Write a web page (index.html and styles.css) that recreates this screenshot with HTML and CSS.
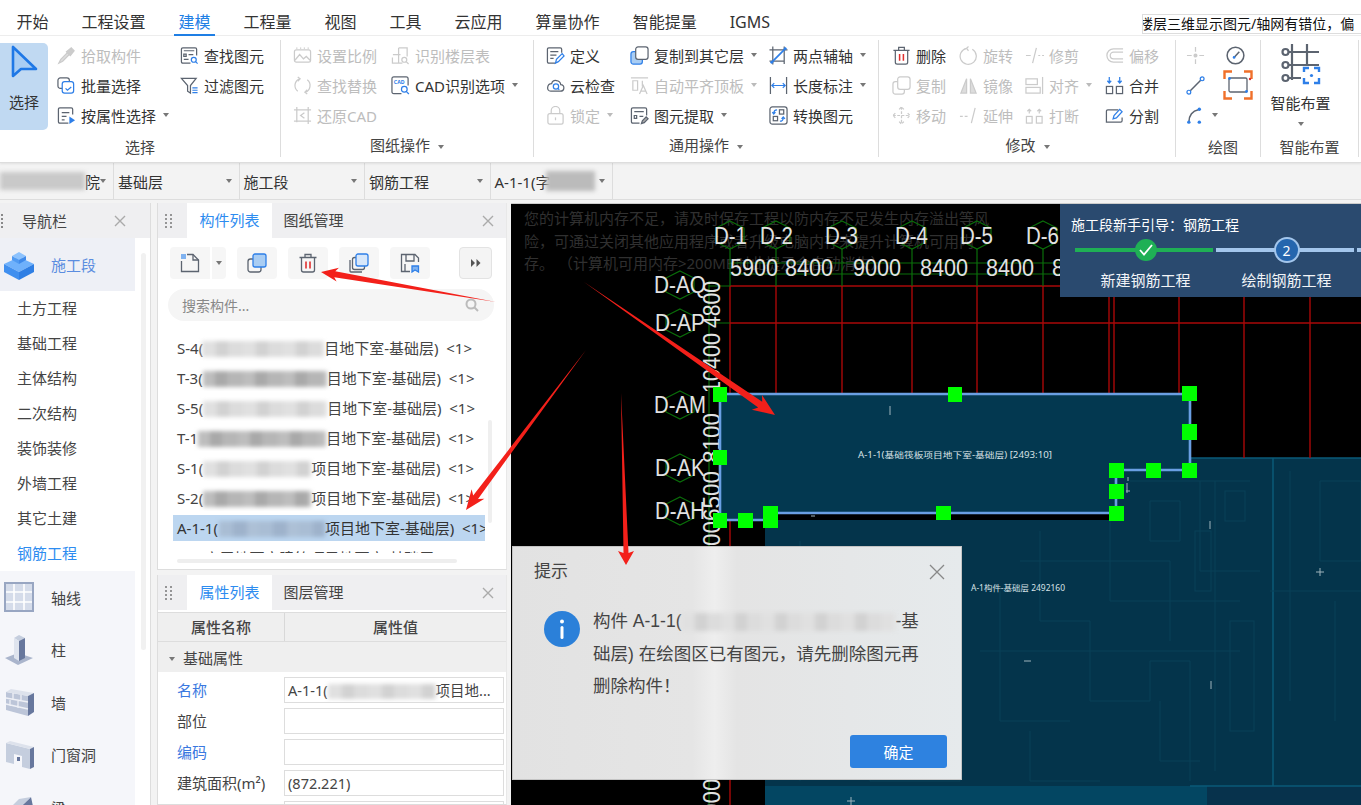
FILE: index.html
```html
<!DOCTYPE html>
<html lang="zh-CN">
<head>
  <meta charset="UTF-8" />
  <title>建模</title>
  <link rel="stylesheet" href="styles.css">
</head>
<body>

<nav class="menubar">
  <a class="tab">开始</a>
  <a class="tab">工程设置</a>
  <a class="tab active">建模</a>
  <a class="tab">工程量</a>
  <a class="tab">视图</a>
  <a class="tab">工具</a>
  <a class="tab">云应用</a>
  <a class="tab">算量协作</a>
  <a class="tab">智能提量</a>
  <a class="tab">IGMS</a>
  <div class="ask"><span>楼层三维显示图元/轴网有错位，偏</span></div>
</nav>

<!-- 功能区 -->
<section class="ribbon">
  <div class="group g-select">
    <div class="group-body">
      <button class="big-select">
        <svg width="32" height="40" viewBox="0 0 32 40"><path d="M5 2 L5 31 L13 24 L28 24 Z" fill="#a9cdf3" stroke="#1f78e6" stroke-width="2.6" stroke-linejoin="round"/></svg>
        <span>选择</span>
      </button>
      <div class="col c123">
        <div class="tool off"><svg class="ic" viewBox="0 0 20 20"><path d="M2 18 L4 14 L11 7 L13 9 L6 16 Z" fill="#ddd"/><path d="M10 6 L15 2 L18 5 L14 10 Z" fill="#ccc"/></svg>拾取构件</div>
        <div class="tool"><svg class="ic" viewBox="0 0 20 20"><rect x="1" y="2" width="12" height="11" rx="2.5"/><rect x="5.5" y="6" width="12" height="12" rx="2.5" fill="#fff" class="b"/><path d="M9 13 l2 2 l4 -3.5" class="b"/></svg>批量选择</div>
        <div class="tool"><svg class="ic" viewBox="0 0 20 20"><path d="M12 18 H3 Q1.5 18 1.5 16.5 V3.5 Q1.5 2 3 2 H15 Q16.5 2 16.5 3.5 V9"/><path d="M5 7 H13 M5 11 H10 M5 14.5 H8"/><path d="M13 11 L19 15 L13 19 Z" class="bf"/></svg>按属性选择<i class="caret"></i></div>
      </div>
      <div class="col">
        <div class="tool"><svg class="ic" viewBox="0 0 20 20"><path d="M11 18 H3 Q1.5 18 1.5 16.5 V3.5 Q1.5 2 3 2 H16 Q17.5 2 17.5 3.5 V10"/><path d="M4 5 H15 M4 8.5 H6.5 V11 H4 Z M9 9 H14 M4 14 H9"/><circle cx="14.5" cy="14.5" r="2.6" class="b"/><path d="M16.5 16.5 L18.5 18.5" class="b"/></svg>查找图元</div>
        <div class="tool"><svg class="ic" viewBox="0 0 20 20"><path d="M1.5 2.5 H17 L11 10 V18 L8 16 V10 Z"/><path d="M13 12.5 H18.5 M13 15 H18.5 M13 17.5 H18.5" class="b"/></svg>过滤图元</div>
      </div>
    </div>
    <div class="group-label">选择</div>
  </div>

  <div class="group g-draw">
    <div class="group-body">
      <div class="col c98">
        <div class="tool off"><svg class="ic" viewBox="0 0 20 20"><rect x="1.5" y="4" width="17" height="13" rx="2"/><path d="M4 1.5 V3 M8 1.5 V3 M12 1.5 V3 M16 1.5 V3"/><path d="M2 15 L7 9 L11 13.5 L14 11 L18 15"/></svg>设置比例</div>
        <div class="tool off"><svg class="ic" viewBox="0 0 20 20"><path d="M7 3 A7.5 7.5 0 0 0 5 16 M13 17 A7.5 7.5 0 0 0 15 4"/><path d="M5 1 L7.5 3 L5 5.5 M15 19 L12.5 17 L15 14.5"/></svg>查找替换</div>
        <div class="tool off"><svg class="ic" viewBox="0 0 20 20"><path d="M4 1 V17 M1 4 H19 M16 1 V19 M1 16 H19"/><path d="M12 7 L8 10 L12 13"/></svg>还原CAD</div>
      </div>
      <div class="col">
        <div class="tool off"><svg class="ic" viewBox="0 0 20 20"><path d="M8 2 H17 V11 M8 2 V18 M2 9 H10 M1.5 12 V18 H12"/><circle cx="14" cy="14.5" r="2.6"/><path d="M16 16.5 L18.5 19"/></svg>识别楼层表</div>
        <div class="tool"><svg class="ic" viewBox="0 0 20 20"><path d="M11 18.5 H3 Q1 18.5 1 16.5 V3 Q1 1 3 1 H16 Q18 1 18 3 V10"/><text x="3" y="8" class="cad">CAD</text><circle cx="14" cy="14" r="3" class="b"/><path d="M16 16.2 L18.8 19" class="b"/></svg>CAD识别选项<i class="caret"></i></div>
      </div>
    </div>
    <div class="group-label pull">图纸操作<i class="caret"></i></div>
  </div>

  <div class="group g-common">
    <div class="group-body">
      <div class="col c84">
        <div class="tool"><svg class="ic" viewBox="0 0 20 20"><path d="M10 18 H3 Q1.5 18 1.5 16.5 V3.5 Q1.5 2 3 2 H15 Q16.5 2 16.5 3.5 V7"/><path d="M4.5 6 H13 M4.5 9.5 H11 M4.5 13 H8"/><path d="M10 18 L11 14 L17 8 L19 10.5 L13 16.5 Z" class="b"/></svg>定义</div>
        <div class="tool"><svg class="ic" viewBox="0 0 20 20"><path d="M5 16 H15 C20 16 20 9 15.5 9 C15 4 7 3 6 8 C1 8 0 16 5 16 Z"/><circle cx="10.5" cy="11" r="2.8" class="b"/><path d="M12.5 13 L14 14.5" class="b"/></svg>云检查</div>
        <div class="tool off"><svg class="ic" viewBox="0 0 20 20"><rect x="2" y="8" width="16" height="11" rx="2"/><path d="M5.5 8 V5 A4.5 4.5 0 0 1 14.5 5 V8"/><path d="M10 12 V15"/></svg>锁定<i class="caret"></i></div>
      </div>
      <div class="col c139">
        <div class="tool"><svg class="ic" viewBox="0 0 20 20"><rect x="1" y="6" width="12" height="13" rx="2.5" fill="#a9cdf3" class="b"/><rect x="6" y="1" width="13" height="13" rx="2.5" fill="#fff"/></svg>复制到其它层<i class="caret"></i></div>
        <div class="tool off"><svg class="ic" viewBox="0 0 20 20"><path d="M1 2 H19 M3 5 V15 H8 V5 Z M13 5 V11"/><path d="M10 19 L14 10 L18 19 M11.5 16 H16.5"/></svg>自动平齐顶板<i class="caret"></i></div>
        <div class="tool"><svg class="ic" viewBox="0 0 20 20"><path d="M10 18 H3 Q1.5 18 1.5 16.5 V3.5 Q1.5 2 3 2 H16 Q17.5 2 17.5 3.5 V10"/><path d="M4.5 6 H14.5 M4.5 10 H7 V13 H4.5 Z M10 11 H14"/><path d="M12 18.5 L13 15.5 L17 11.5 L19 13.5 L15 17.5 Z" fill="#aaa"/></svg>图元提取<i class="caret"></i></div>
      </div>
      <div class="col">
        <div class="tool"><svg class="ic" viewBox="0 0 20 20"><path d="M0.5 4 H19.5 M4 0.5 V19.5 M0.5 16 H16 M16 0.5 V19"/><path d="M2 18 L18 2" class="b thick"/><circle cx="3" cy="17" r="1.5" class="bf"/><circle cx="17" cy="3" r="1.5" class="bf"/></svg>两点辅轴<i class="caret"></i></div>
        <div class="tool"><svg class="ic" viewBox="0 0 20 20"><path d="M1.5 1 V19 M18.5 1 V19"/><path d="M3 10 H17 M5.5 7.5 L3 10 L5.5 12.5 M14.5 7.5 L17 10 L14.5 12.5" class="b"/></svg>长度标注<i class="caret"></i></div>
        <div class="tool"><svg class="ic" viewBox="0 0 20 20"><rect x="1" y="1" width="18" height="18" rx="2.5"/><rect x="11" y="4" width="4.5" height="4.5"/><rect x="4.5" y="11" width="4.5" height="4.5"/><path d="M8.5 4 Q5 4 5 8 M3.5 6.5 L5 8.5 L6.8 6.5 M11.5 16 Q15 16 15 12 M13.2 13.5 L15 11.5 L16.8 13.5" class="b"/></svg>转换图元</div>
      </div>
    </div>
    <div class="group-label pull">通用操作<i class="caret"></i></div>
  </div>

  <div class="group g-edit">
    <div class="group-body">
      <div class="col c67">
        <div class="tool"><svg class="ic" viewBox="0 0 20 20"><path d="M1.5 4.5 H18.5 M7 4 V1.5 H13 V4 M3.5 5 V17 Q3.5 19 5.5 19 H14.5 Q16.5 19 16.5 17 V5"/><path d="M8 8.5 V15.5 M12 8.5 V15.5" class="r"/></svg>删除</div>
        <div class="tool off"><svg class="ic" viewBox="0 0 20 20"><rect x="1" y="6" width="12" height="13" rx="2.5"/><rect x="6" y="1" width="13" height="13" rx="2.5" fill="#fff"/></svg>复制</div>
        <div class="tool off"><svg class="ic" viewBox="0 0 20 20"><path d="M10 1 V19 M1 10 H19 M7.5 3.5 L10 1 L12.5 3.5 M7.5 16.5 L10 19 L12.5 16.5 M3.5 7.5 L1 10 L3.5 12.5 M16.5 7.5 L19 10 L16.5 12.5" stroke-dasharray="3 1.5"/></svg>移动</div>
      </div>
      <div class="col c66">
        <div class="tool off"><svg class="ic" viewBox="0 0 20 20"><path d="M8 2.5 A8.5 8.5 0 1 0 14 3.5"/><path d="M10 0.5 L8 2.5 L10 5"/></svg>旋转</div>
        <div class="tool off"><svg class="ic" viewBox="0 0 20 20"><path d="M8 3 L2 18 H8 Z" fill="#ddd"/><path d="M12 3 L18 18 H12 Z" fill="#ddd"/></svg>镜像</div>
        <div class="tool off"><svg class="ic" viewBox="0 0 20 20"><path d="M1 11 H4 M6 11 H9"/><path d="M13 18 L17 2"/></svg>延伸</div>
      </div>
      <div class="col c80">
        <div class="tool off"><svg class="ic" viewBox="0 0 20 20"><path d="M1 10 H6 M8 18 L12 2"/><path d="M14 10 H16 M18 10 H20"/></svg>修剪</div>
        <div class="tool off"><svg class="ic" viewBox="0 0 20 20"><rect x="1" y="3" width="12" height="6"/><rect x="1" y="12" width="15" height="6"/><path d="M18.5 1 V19"/></svg>对齐<i class="caret"></i></div>
        <div class="tool off"><svg class="ic" viewBox="0 0 20 20"><rect x="1.5" y="11" width="6" height="7"/><rect x="12" y="11" width="6" height="7"/><path d="M4.5 8 V4 M2.5 5.5 L4.5 3.5 L6.5 5.5 M15 8 V4 M13 5.5 L15 3.5 L17 5.5"/></svg>打断</div>
      </div>
      <div class="col">
        <div class="tool off"><svg class="ic" viewBox="0 0 20 20"><path d="M19 3 H9 A7 7 0 0 0 9 17 H19 M19 6.5 H9 A3.5 3.5 0 0 0 9 13.5 H19"/></svg>偏移</div>
        <div class="tool"><svg class="ic" viewBox="0 0 20 20"><rect x="1.5" y="11" width="6.5" height="7.5"/><rect x="12" y="11" width="6.5" height="7.5"/><path d="M4.5 1 V7 M2.5 5 L4.5 7.5 L6.5 5 M15.5 1 V7 M13.5 5 L15.5 7.5 L17.5 5" class="b"/></svg>合并</div>
        <div class="tool"><svg class="ic" viewBox="0 0 20 20"><path d="M14 4 H3 Q1.5 4 1.5 5.5 V17 H16.5 Q18 17 18 15.5 V12"/><path d="M8.5 13.5 L9.5 10 L15.5 3.5 L18 6 L12 12.5 Z" class="b"/></svg>分割</div>
      </div>
    </div>
    <div class="group-label pull">修改<i class="caret"></i></div>
  </div>

  <div class="group g-shape">
    <div class="group-body">
      <div class="col c40">
        <div class="tool off"><svg class="ic" viewBox="0 0 20 20"><path d="M10 1 V6 M10 14 V19 M1 10 H6 M14 10 H19"/><circle cx="10" cy="10" r="1.5" fill="#ccc"/></svg></div>
        <div class="tool"><svg class="ic" viewBox="0 0 20 20"><path d="M3.5 16.5 L16.5 3.5" stroke-width="1.6"/><circle cx="3" cy="17" r="2" class="b" fill="#fff"/><circle cx="17" cy="3" r="2" class="b" fill="#fff"/></svg></div>
        <div class="tool"><svg class="ic" viewBox="0 0 20 20"><path d="M3 17 C3 10 7 5 13 4" stroke-width="1.6"/><circle cx="3" cy="17" r="1.8" class="bf"/><circle cx="14" cy="3.5" r="1.8" class="bf"/><circle cx="14" cy="17" r="1.8" class="bf"/></svg><i class="caret"></i></div>
      </div>
      <div class="col">
        <div class="tool"><svg class="ic" viewBox="0 0 20 20"><circle cx="10" cy="10" r="8.8" stroke-width="1.6"/><path d="M8.5 12 L14 6" stroke-width="1.6"/><circle cx="8.5" cy="12" r="1.4" class="bf"/></svg></div>
        <div class="tool picked"><svg class="frame" width="30" height="30" viewBox="0 0 30 30"><path d="M1.5 9 V1.5 H9 M21 1.5 H28.5 V9 M28.5 21 V28.5 H21 M9 28.5 H1.5 V21" fill="none" stroke="#f0702a" stroke-width="2.4"/><rect x="6" y="8" width="18" height="14" rx="1.5" fill="none" stroke="#5c6470" stroke-width="1.3"/><circle cx="6.5" cy="8.5" r="1.4" fill="#2e7fe8"/><circle cx="23.5" cy="21.5" r="1.4" fill="#2e7fe8"/><circle cx="27" cy="9" r="1.2" fill="#e03030"/></svg></div>
      </div>
    </div>
    <div class="group-label">绘图</div>
  </div>

  <div class="group g-smart">
    <div class="smart-body">
      <svg width="40" height="42" viewBox="0 0 40 42" fill="none" stroke="#5c6470" stroke-width="2.2"><path d="M11 0 V36 M26 0 V22 M8 8 H38 M8 21 H38 M8 34 H20"/><circle cx="4.5" cy="8" r="3"/><circle cx="4.5" cy="21" r="3"/><circle cx="4.5" cy="34" r="3"/><path d="M23 28 V24 H28 M33 24 H38 V28 M38 34 V39 H33 M28 39 H23 V34" stroke="#2e7fe8" stroke-width="2.4"/><circle cx="30.5" cy="31.5" r="1.6" fill="#2e7fe8" stroke="none"/></svg>
      <span>智能布置</span>
      <i class="caret"></i>
    </div>
    <div class="group-label">智能布置</div>
  </div>
</section>

<div class="floorbar">
  <div class="seg"><span class="smudge s-top"></span><span>院</span><i class="caret"></i></div>
  <div class="seg"><span>基础层</span><i class="caret"></i></div>
  <div class="seg"><span>施工段</span><i class="caret"></i></div>
  <div class="seg"><span>钢筋工程</span><i class="caret"></i></div>
  <div class="seg seg-last"><span>A-1-1(字</span><span class="smudge s-comp"></span><i class="caret"></i></div>
</div>

<main class="workspace">
  <!-- 导航栏 -->
  <aside class="nav-panel">
    <div class="panel-head nav-head">
      <svg class="grip" width="6" height="16" viewBox="0 0 6 16"><g fill="#666"><circle cx="1" cy="2" r="1"/><circle cx="1" cy="6" r="1"/><circle cx="1" cy="10" r="1"/><circle cx="1" cy="14" r="1"/></g></svg>
      <span class="nav-title">导航栏</span>
      <svg class="close" width="12" height="12" viewBox="0 0 12 12"><path d="M1 1 L11 11 M11 1 L1 11" stroke="#aaa" stroke-width="1.4"/></svg>
    </div>
    <div class="nav-body">
      <div class="nav-list">
        <div class="nav-big current">
          <svg width="32" height="32" viewBox="0 0 32 32"><path d="M1 15 L16 8 L31 15 L16 23 Z" fill="#6fb1fb"/><path d="M1 15 V23 L16 31 V23 Z" fill="#3f8fef"/><path d="M31 15 V23 L16 31 V23 Z" fill="#2f7fe4"/><path d="M9 7 L16 3 L23 7 L16 11 Z" fill="#8cc2fd"/><path d="M9 7 V11 L16 15 V11 Z" fill="#4f9af2"/><path d="M23 7 V11 L16 15 V11 Z" fill="#3f8aea"/></svg>
          <span>施工段</span>
        </div>
        <div class="nav-item">土方工程</div>
        <div class="nav-item">基础工程</div>
        <div class="nav-item">主体结构</div>
        <div class="nav-item">二次结构</div>
        <div class="nav-item">装饰装修</div>
        <div class="nav-item">外墙工程</div>
        <div class="nav-item">其它土建</div>
        <div class="nav-item on">钢筋工程</div>
        <div class="nav-group">
          <div class="nav-big">
            <svg width="32" height="32" viewBox="0 0 32 32"><rect x="2" y="2" width="28" height="28" fill="#d5dcea" stroke="#98a6c2" stroke-width="2"/><path d="M11 3 V29 M21 3 V29 M3 11 H29 M3 21 H29" stroke="#fff" stroke-width="1.6"/></svg>
            <span>轴线</span>
          </div>
          <div class="nav-big">
            <svg width="32" height="32" viewBox="0 0 32 32"><path d="M2 24 L15 19 L30 24 L15 31 Z" fill="#aab5cc"/><path d="M11 4 L16 1 L22 4 L16 7 Z" fill="#c5cede"/><path d="M11 4 V24 L16 27 V7 Z" fill="#dfe4ee"/><path d="M22 4 V24 L16 27 V7 Z" fill="#67779d"/></svg>
            <span>柱</span>
          </div>
          <div class="nav-big">
            <svg width="32" height="32" viewBox="0 0 32 32"><path d="M3 6 L25 10 V30 L3 24 Z" fill="#bcc5d8"/><path d="M3 6 L8 3 L31 7 L25 10 Z" fill="#dde2ec"/><path d="M25 10 L31 7 V26 L25 30 Z" fill="#67779d"/><path d="M3 12 L25 16 M3 18 L25 23 M10 7 V13 M18 9 V15 M7 14 V20 M15 15 V22" stroke="#eef0f6" stroke-width="1.3"/></svg>
            <span>墙</span>
          </div>
          <div class="nav-big">
            <svg width="32" height="32" viewBox="0 0 32 32"><path d="M3 4 L27 10 V30 L19 28 V17 L11 15 V25 L3 23 Z" fill="#c5cede"/><path d="M3 4 L7 2 L31 8 L27 10 Z" fill="#dde2ec"/><path d="M27 10 L31 8 V28 L27 30 Z" fill="#67779d"/><rect x="14" y="18" width="3" height="4" fill="#67779d"/></svg>
            <span>门窗洞</span>
          </div>
          <div class="nav-big">
            <svg width="32" height="32" viewBox="0 0 32 32"><path d="M3 30 L28 6 L31 20 L20 32 Z" fill="#67779d"/><path d="M3 30 L28 6 L16 8 L0 24 Z" fill="#c5cede"/></svg>
            <span>梁</span>
          </div>
        </div>
      </div>
      <div class="nav-scroll"></div>
    </div>
  </aside>

  <div class="mid-col">
    <!-- 构件列表 -->
    <section class="panel list-panel">
      <div class="panel-head">
        <svg class="grip" width="8" height="16" viewBox="0 0 8 16"><g fill="#777"><circle cx="1" cy="2" r="1"/><circle cx="1" cy="6" r="1"/><circle cx="1" cy="10" r="1"/><circle cx="1" cy="14" r="1"/><circle cx="6" cy="2" r="1"/><circle cx="6" cy="6" r="1"/><circle cx="6" cy="10" r="1"/><circle cx="6" cy="14" r="1"/></g></svg>
        <span class="ptab active">构件列表</span>
        <span class="ptab">图纸管理</span>
        <svg class="close" width="12" height="12" viewBox="0 0 12 12"><path d="M1 1 L11 11 M11 1 L1 11" stroke="#aaa" stroke-width="1.4"/></svg>
      </div>
      <div class="list-tools">
        <button class="tbtn tb-new"><svg width="20" height="20" viewBox="0 0 20 20" fill="none" stroke="#5c6470" stroke-width="1.3"><path d="M7 1.5 H13 L18.5 7 V18.5 H1.5 V8"/><path d="M13 1.5 V7 H18.5"/><rect x="1" y="1" width="5" height="5" fill="#7fb2f0" stroke="none"/></svg></button>
        <button class="tbtn tb-drop"><i class="caret"></i></button>
        <button class="tbtn"><svg width="20" height="20" viewBox="0 0 20 20" fill="none" stroke="#5c6470" stroke-width="1.3"><rect x="1" y="6" width="13" height="13" rx="2.5"/><rect x="6" y="1" width="13" height="13" rx="2" fill="#a9cdf3" stroke="#2e7fe8"/></svg></button>
        <button class="tbtn"><svg width="20" height="20" viewBox="0 0 20 20" fill="none" stroke="#5c6470" stroke-width="1.3"><path d="M1.5 4.5 H18.5 M7 4 V1.5 H13 V4 M3.5 5 V17 Q3.5 19 5.5 19 H14.5 Q16.5 19 16.5 17 V5"/><path d="M8 8.5 V15.5 M12 8.5 V15.5" stroke="#e03030" stroke-width="1.6"/></svg></button>
        <button class="tbtn"><svg width="20" height="20" viewBox="0 0 20 20" fill="none" stroke="#5c6470" stroke-width="1.3"><path d="M1 7 V18 Q1 19 2 19 H13"/><rect x="3.5" y="4.5" width="12" height="12" rx="2"/><rect x="7" y="1" width="12" height="12" rx="2" fill="#d7e7fa" stroke="#2e7fe8"/></svg></button>
        <button class="tbtn"><svg width="20" height="20" viewBox="0 0 20 20" fill="none" stroke="#5c6470" stroke-width="1.3"><path d="M10 18.5 H1.5 V1.5 H15 L18.5 5 V9"/><path d="M6 1.5 V8 H14 V1.5 M5 18 V11"/><path d="M12 13 H18.5 V19 L15 17 L12 19 Z" fill="#7fb2f0" stroke="#2e7fe8"/></svg></button>
        <button class="tbtn tb-more"><svg width="10" height="8" viewBox="0 0 10 8"><path d="M0 0 L4 4 L0 8 Z M5.5 0 L9.5 4 L5.5 8 Z" fill="#555"/></svg></button>
      </div>
      <div class="search">
        <span>搜索构件...</span>
        <svg width="14" height="14" viewBox="0 0 14 14" fill="none" stroke="#bbb" stroke-width="2"><circle cx="6" cy="6" r="4.5"/><path d="M9.5 9.5 L13 13"/></svg>
      </div>
      <ul class="comp-list">
        <li>S-4(<span class="smudge w-a light"></span>目地下室-基础层)&nbsp;&nbsp;&lt;1&gt;</li>
        <li>T-3(<span class="smudge w-b dark"></span>目地下室-基础层)&nbsp;&nbsp;&lt;1&gt;</li>
        <li>S-5(<span class="smudge w-c light"></span>目地下室-基础层)&nbsp;&nbsp;&lt;1&gt;</li>
        <li>T-1<span class="smudge w-d dark"></span>目地下室-基础层)&nbsp;&nbsp;&lt;1&gt;</li>
        <li>S-1(<span class="smudge w-e light"></span>项目地下室-基础层)&nbsp;&nbsp;&lt;1&gt;</li>
        <li>S-2(<span class="smudge w-f dark"></span>项目地下室-基础层)&nbsp;&nbsp;&lt;1&gt;</li>
        <li class="picked-row">A-1-1(<span class="smudge w-g blue"></span>项目地下室-基础层)&nbsp;&nbsp;&lt;1&gt;</li>
        <li>A-2(高层地下室建筑项目地下室-基础层)&nbsp;&nbsp;&lt;1&gt;</li>
      </ul>
      <div class="hscroll"></div>
      <div class="vscroll"></div>
    </section>

    <!-- 属性列表 -->
    <section class="panel prop-panel">
      <div class="panel-head">
        <svg class="grip" width="8" height="16" viewBox="0 0 8 16"><g fill="#777"><circle cx="1" cy="2" r="1"/><circle cx="1" cy="6" r="1"/><circle cx="1" cy="10" r="1"/><circle cx="1" cy="14" r="1"/><circle cx="6" cy="2" r="1"/><circle cx="6" cy="6" r="1"/><circle cx="6" cy="10" r="1"/><circle cx="6" cy="14" r="1"/></g></svg>
        <span class="ptab active">属性列表</span>
        <span class="ptab">图层管理</span>
        <svg class="close" width="12" height="12" viewBox="0 0 12 12"><path d="M1 1 L11 11 M11 1 L1 11" stroke="#aaa" stroke-width="1.4"/></svg>
      </div>
      <div class="prop-head"><div>属性名称</div><div>属性值</div></div>
      <div class="prop-section"><i class="caret"></i>基础属性</div>
      <div class="prop-row"><label class="link">名称</label><div class="field">A-1-1(<span class="smudge w-h light"></span>项目地...</div></div>
      <div class="prop-row"><label>部位</label><div class="field"></div></div>
      <div class="prop-row"><label class="link">编码</label><div class="field"></div></div>
      <div class="prop-row"><label>建筑面积(m²)</label><div class="field">(872.221)</div></div>
      <div class="prop-row"><label></label><div class="field"></div></div>
    </section>
  </div>

  <!-- 绘图区 -->
  <section class="canvas">
    <svg class="cad-view" viewBox="511 203 850 602" width="850" height="602">
      <g class="notice">
        <text x="524" y="223">您的计算机内存不足，请及时保存工程以防内存不足发生内存溢出等风</text>
        <text x="524" y="246">险，可通过关闭其他应用程序或者升级电脑内存来提升计算机可用内</text>
        <text x="524" y="268">存。 （计算机可用内存&gt;200MB时此提示会自动消失）</text>
      </g>

      <!-- 底层填充 -->
      <path d="M1190 457 H1361 V805 H765 V519 H1116 V469 H1190 Z" fill="#04344b"/>
      <rect x="765" y="785" width="442" height="20" fill="#034662"/>
      <rect x="1207" y="785" width="154" height="20" fill="#07324c"/>
      <path d="M1190 457 H1361 M1273 457 V785 M1190 785 H1361" stroke="#0a5a78" stroke-width="1.5" fill="none"/>
      <g class="faint">
        <path d="M1040 530 V620 H1090 V700 H1150 V660 H1190 V780 M1020 560 H1170 V640 M1000 590 V720 H1070 M1110 520 V600 H1240 M1200 480 V570 H1260 M1215 480 V770 M980 650 H1240 M1030 730 V780 H1100 M1160 700 V760 H1200 M1290 470 V700 M1320 480 H1361 V560 H1320 Z M1335 600 V720 M1270 590 H1361 M1130 480 H1250 M1150 500 H1180 V540 H1150 Z M800 540 V780 M860 620 H940 M870 700 V780 H960 V720" />
        <rect x="1225" y="490" width="20" height="30"/>
        <rect x="1195" y="530" width="16" height="60"/>
        <rect x="1230" y="620" width="24" height="110"/>
      </g>

      <!-- 红色梁线 -->
      <g stroke="#a80808" stroke-width="1.4">
        <path d="M730 285 V805 M776 285 V393 M842 285 V393 M912 285 V393 M977 285 V393 M1043 285 V393 M1109 285 V393 M1114 285 V393 M1179 285 V393 M1244 285 V457 M1310 285 V457"/>
        <path d="M730 285 H1361 M730 322 H1361"/>
      </g>

      <!-- 轴网 -->
      <g class="axis">
        <path d="M730 248 V285 M776 248 V285 M842 248 V285 M912 248 V285 M977 248 V285 M1043 248 V285"/>
        <path d="M730 262 H1060 M730 273 H1060 M709 285 H730 M709 322 H730 M709 280 V805"/>
        <path d="M730 220 L744 227 V241 L730 248 L716 241 V227 Z M776 220 L790 227 V241 L776 248 L762 241 V227 Z M842 220 L856 227 V241 L842 248 L828 241 V227 Z M912 220 L926 227 V241 L912 248 L898 241 V227 Z M977 220 L991 227 V241 L977 248 L963 241 V227 Z M1043 220 L1057 227 V241 L1043 248 L1029 241 V227 Z"/>
        <path d="M680 270 L694 277 V291 L680 298 L666 291 V277 Z M680 308 L694 315 V329 L680 336 L666 329 V315 Z M680 390 L694 397 V411 L680 418 L666 411 V397 Z M680 453 L694 460 V474 L680 481 L666 474 V460 Z M680 496 L694 503 V517 L680 524 L666 517 V503 Z"/>
      </g>
      <g class="axis-text">
        <text x="714" y="243" textLength="33" lengthAdjust="spacingAndGlyphs">D-1</text>
        <text x="760" y="243" textLength="33" lengthAdjust="spacingAndGlyphs">D-2</text>
        <text x="825" y="243" textLength="33" lengthAdjust="spacingAndGlyphs">D-3</text>
        <text x="895" y="243" textLength="33" lengthAdjust="spacingAndGlyphs">D-4</text>
        <text x="960" y="243" textLength="33" lengthAdjust="spacingAndGlyphs">D-5</text>
        <text x="1026" y="243" textLength="33" lengthAdjust="spacingAndGlyphs">D-6</text>
        <text x="730" y="275" textLength="48" lengthAdjust="spacingAndGlyphs">5900</text>
        <text x="785" y="275" textLength="48" lengthAdjust="spacingAndGlyphs">8400</text>
        <text x="853" y="275" textLength="48" lengthAdjust="spacingAndGlyphs">9000</text>
        <text x="920" y="275" textLength="48" lengthAdjust="spacingAndGlyphs">8400</text>
        <text x="986" y="275" textLength="48" lengthAdjust="spacingAndGlyphs">8400</text>
        <text x="1052" y="275" textLength="48" lengthAdjust="spacingAndGlyphs">8400</text>
        <text x="654" y="292" textLength="52" lengthAdjust="spacingAndGlyphs">D-AQ</text>
        <text x="655" y="330" textLength="50" lengthAdjust="spacingAndGlyphs">D-AP</text>
        <text x="654" y="412" textLength="52" lengthAdjust="spacingAndGlyphs">D-AM</text>
        <text x="655" y="475" textLength="50" lengthAdjust="spacingAndGlyphs">D-AK</text>
        <text x="655" y="518" textLength="50" lengthAdjust="spacingAndGlyphs">D-AH</text>
        <text transform="translate(720 327) rotate(-90)" textLength="47" lengthAdjust="spacingAndGlyphs">4800</text>
        <text transform="translate(720 392) rotate(-90)" textLength="60" lengthAdjust="spacingAndGlyphs">10400</text>
        <text transform="translate(720 462) rotate(-90)" textLength="50" lengthAdjust="spacingAndGlyphs">8100</text>
        <text transform="translate(720 520) rotate(-90)" textLength="50" lengthAdjust="spacingAndGlyphs">6500</text>
        <text transform="translate(720 570) rotate(-90)" textLength="50" lengthAdjust="spacingAndGlyphs">9000</text>
        <text transform="translate(720 815) rotate(-90)" textLength="50" lengthAdjust="spacingAndGlyphs">9000</text>
      </g>

      <!-- 选中的筏板 -->
      <path d="M720 393 H1190 V469 H1116 V512 H770 V519 H720 Z" fill="#033850" stroke="#6a9fe3" stroke-width="2.6"/>
      <g class="tiny">
        <text x="858" y="457" textLength="194" lengthAdjust="spacingAndGlyphs">A-1-1(基础筏板项目地下室-基础层) [2493:10]</text>
        <text x="971" y="590" textLength="94" lengthAdjust="spacingAndGlyphs">A-1构件-基础层 2492160</text>
      </g>
      <g stroke="#9fb4bd" stroke-width="1">
        <path d="M890 405 V414 M1127 482 V492 M1126 490 h4 M1128 476 v4 M1024 660 h7 M1210 520 v8 M1316 571 h8 M1320 567 v8 M851 796 v8 M847 800 h8 M811 515 h4 M1211 680 v8"/>
      </g>
      <!-- 夹点 -->
      <g fill="#00ff00">
        <rect x="713" y="386" width="14" height="15"/>
        <rect x="948" y="386" width="14" height="15"/>
        <rect x="1182" y="385" width="15" height="15"/>
        <rect x="1182" y="423" width="15" height="16"/>
        <rect x="1182" y="462" width="15" height="15"/>
        <rect x="1146" y="462" width="15" height="15"/>
        <rect x="1109" y="462" width="15" height="15"/>
        <rect x="1109" y="483" width="15" height="15"/>
        <rect x="1109" y="505" width="15" height="15"/>
        <rect x="936" y="505" width="15" height="14"/>
        <rect x="763" y="505" width="15" height="22"/>
        <rect x="738" y="512" width="15" height="15"/>
        <rect x="713" y="512" width="14" height="15"/>
        <rect x="713" y="449" width="14" height="15"/>
      </g>
    </svg>

    <!-- 新手引导 -->
    <div class="guide">
      <div class="guide-title">施工段新手引导：钢筋工程</div>
      <div class="steps">
        <div class="step done">
          <span class="line"></span>
          <span class="dot"><svg width="14" height="12" viewBox="0 0 14 12" fill="none" stroke="#fff" stroke-width="1.8"><path d="M1 6 L5 10.5 L13 1"/></svg></span>
          <span class="step-name">新建钢筋工程</span>
        </div>
        <div class="step now">
          <span class="line"></span>
          <span class="dot">2</span>
          <span class="step-name">绘制钢筋工程</span>
        </div>
        <div class="step next"><span class="line"></span></div>
      </div>
    </div>

    <!-- 提示框 -->
    <div class="dialog">
      <div class="dialog-head">
        <span>提示</span>
        <svg width="16" height="16" viewBox="0 0 16 16"><path d="M1 1 L15 15 M15 1 L1 15" stroke="#888" stroke-width="1.3"/></svg>
      </div>
      <div class="dialog-body">
        <svg class="info" width="36" height="36" viewBox="0 0 36 36"><circle cx="18" cy="18" r="18" fill="#2b80d9"/><circle cx="18" cy="10.5" r="2" fill="#fff"/><rect x="16.5" y="15" width="3" height="13" rx="1.5" fill="#fff"/></svg>
        <p>构件 A-1-1(<span class="smudge w-i light"></span>-基<br>础层) 在绘图区已有图元，请先删除图元再<br>删除构件！</p>
      </div>
      <div class="dialog-foot"><button class="btn-ok">确定</button></div>
    </div>
  </section>
</main>

<!-- 截图上的红色标注箭头 -->
<svg class="marks" width="1361" height="805" viewBox="0 0 1361 805">
  <g fill="#f3201a">
    <polygon points="321,272 336.6,281.6 334.3,277.2 496,302 335.3,271.2 339,267.8"/>
    <polygon points="775,415 762,395 762.2,401.8 584,282 758.2,407.6 751.8,409.8"/>
    <polygon points="466,510 484.4,498.8 478,499 586,350 473.2,495.4 471.6,489.2"/>
    <polygon points="626,565 634,551 628.5,553 621,393 623.5,553 618,551"/>
  </g>
</svg>

</body>
</html>
```

FILE: styles.css
```css
* { box-sizing: border-box; }
html, body { margin: 0; padding: 0; }
body {
  width: 1361px;
  height: 805px;
  overflow: hidden;
  position: relative;
  background: #f3f3f3;
  color: #333;
  font-family: "Noto Sans", "Noto Sans CJK SC", sans-serif;
  font-size: 15px;
}
button { font-family: inherit; border: none; padding: 0; }
ul { list-style: none; margin: 0; padding: 0; }

.caret {
  display: inline-block;
  width: 0;
  height: 0;
  border-left: 3px solid transparent;
  border-right: 3px solid transparent;
  border-top: 4px solid #777;
}

.smudge {
  display: inline-block;
  height: 16px;
  vertical-align: -3px;
  filter: blur(2px);
  background: #ccc;
}
.smudge.light { background: repeating-linear-gradient(90deg, #e0e0e0 0 14px, #d2d2d2 14px 26px, #dcdcdc 26px 40px); }
.smudge.dark { background: repeating-linear-gradient(90deg, #bdbdbd 0 12px, #a9a9a9 12px 24px, #b6b6b6 24px 40px); }
.smudge.blue { background: repeating-linear-gradient(90deg, #a9bdd4 0 14px, #9eb2cb 14px 28px, #adc0d6 28px 40px); }

/* 菜单 */
.menubar {
  height: 36px;
  display: flex;
  align-items: center;
  background: #fff;
  border-bottom: 1px solid #eee;
  position: relative;
}
.tab {
  height: 36px;
  line-height: 44px;
  padding: 0 16.5px;
  font-size: 16px;
  color: #333;
  position: relative;
}
.tab.active { color: #1f7fe5; }
.tab.active::after {
  content: "";
  position: absolute;
  left: 12px;
  right: 12px;
  bottom: 0;
  height: 2px;
  background: #1f7fe5;
}
.ask {
  position: absolute;
  left: 1142px;
  top: 14px;
  width: 219px;
  height: 20px;
  background: #fff;
  border-left: 1px solid #ddd;
  border-top: 1px solid #ddd;
  border-bottom: 1px solid #ddd;
  overflow: hidden;
  white-space: nowrap;
  font-size: 14px;
  line-height: 18px;
  color: #111;
}
.ask span { display: inline-block; margin-left: -4px; }

/* 功能区 */
.ribbon {
  height: 127px;
  display: flex;
  background: #fff;
  border-bottom: 1px solid #ddd;
  box-shadow: 0 1px 2px rgb(0 0 0 / 0.08);
  position: relative;
}
.group {
  display: flex;
  flex-direction: column;
  height: 117px;
  margin-top: 4px;
  border-right: 1px solid #ddd;
}
.group-body { display: flex; height: 92px; }
.group-label {
  height: 25px;
  line-height: 30px;
  text-align: center;
  font-size: 15px;
  color: #444;
}
.group-label.pull { line-height: 26px; margin-left: -12px; }
.group-label .caret { margin-left: 8px; vertical-align: 2px; }

.g-select { width: 281px; }
.g-draw { width: 253px; padding-left: 12px; }
.g-common { width: 345px; padding-left: 12px; }
.g-edit { width: 297px; padding-left: 13px; }
.g-shape { width: 85px; padding-left: 10px; }
.g-smart { width: 98px; }

.big-select {
  width: 48px;
  height: 87px;
  margin: 3px 9px 0 0;
  background: #c0d9f2;
  border-radius: 0 5px 5px 0;
  display: flex;
  flex-direction: column;
  align-items: center;
  font-size: 15px;
  color: #333;
}
.big-select svg { margin: 2px 0 6px; }
.big-select span { line-height: 22px; }

.col { display: flex; flex-direction: column; }
.c123 { width: 123px; }
.c98 { width: 98px; }
.c84 { width: 84px; }
.c139 { width: 139px; }
.c67 { width: 67px; }
.c66 { width: 66px; }
.c80 { width: 80px; }
.c40 { width: 40px; }

.tool {
  height: 30px;
  display: flex;
  align-items: center;
  gap: 5px;
  white-space: nowrap;
  font-size: 15px;
  color: #333;
}
.tool .caret { margin-left: 2px; }
.tool.off { color: #bdbdbd; }
.tool.off .caret { border-top-color: #bbb; }
.tool.picked { height: 30px; margin: 0 0 0 -3px; }

.ic {
  width: 19px;
  height: 19px;
  flex: none;
  fill: none;
  stroke: #5c6470;
  stroke-width: 1.3;
}
.tool.off .ic { stroke: #cbcbcb; }
.ic .b { stroke: #2e7fe8; }
.ic .bf { fill: #2e7fe8; stroke: none; }
.ic .r { stroke: #e03030; stroke-width: 1.6; }
.ic .thick { stroke-width: 1.8; }
.ic .cad { font-size: 5.5px; font-weight: 700; fill: #2e7fe8; stroke: none; }

.smart-body {
  height: 92px;
  padding-right: 18px;
  display: flex;
  flex-direction: column;
  align-items: center;
  font-size: 15px;
}
.smart-body svg { margin: 4px 0 6px; }
.smart-body span { line-height: 22px; }
.smart-body .caret { margin-top: 8px; }

/* 楼层条 */
.floorbar {
  height: 37px;
  display: flex;
  align-items: stretch;
  background: #f3f3f3;
  border-bottom: 1px solid #ddd;
  font-size: 15px;
}
.seg {
  width: 125.5px;
  display: flex;
  align-items: center;
  padding: 0 7px 0 4px;
  border-right: 1px solid #ddd;
  white-space: nowrap;
}
.seg .caret { margin-left: auto; }
.seg:first-child { width: 114px; padding-left: 0; }
.seg-last { width: 122px; }
.s-top { width: 88px; height: 18px; background: #c9c9c9; }
.s-comp { width: 49px; height: 20px; background: #bbb; margin-left: -4px; }

/* 主区域 */
.workspace {
  height: 605px;
  display: flex;
  padding-top: 3px;
}
.nav-panel {
  width: 151px;
  flex: none;
  margin-right: 6px;
  background: #fff;
  border-right: 1px solid #ddd;
  overflow: hidden;
}
.panel-head {
  height: 35px;
  flex: none;
  display: flex;
  align-items: center;
  background: #efeff1;
  font-size: 15px;
  color: #444;
}
.nav-head { padding: 0 12px 0 1px; }
.panel-head.nav-head .grip { margin: 0; }
.nav-title { margin-left: 15px; }
.close { margin-left: auto; }
.nav-body { display: flex; }
.nav-list { width: 135px; flex: none; }
.nav-scroll {
  width: 5px;
  height: 397px;
  margin: 15px 0 0 6px;
  background: #f1f1f1;
  border-radius: 3px;
}
.nav-big {
  height: 52.5px;
  display: flex;
  align-items: center;
  gap: 16px;
  padding-left: 3px;
  font-size: 15px;
  color: #444;
}
.nav-big.current { background: #eef0f6; color: #5b8de0; height: 53px; }
.nav-item {
  height: 35px;
  line-height: 35px;
  padding-left: 17px;
  font-size: 15px;
  color: #444;
}
.nav-item.on { color: #2d8cf0; }
.nav-group { background: #f5f6fa; }

.mid-col {
  width: 350px;
  flex: none;
  margin-right: 4px;
  display: flex;
  flex-direction: column;
  gap: 5px;
}
.panel {
  background: #fff;
  border: 1px solid #ddd;
  border-top: none;
  border-right-color: #e8e8e8;
  display: flex;
  flex-direction: column;
  position: relative;
  overflow: hidden;
}
.list-panel { height: 367px; }
.prop-panel { flex: 1; }
.panel-head .grip { margin-left: 7px; margin-right: 14px; }
.ptab {
  width: 85px;
  height: 35px;
  line-height: 35px;
  text-align: center;
  font-size: 15px;
  color: #444;
}
.ptab + .ptab { margin-left: -1px; }
.ptab.active { background: #fff; color: #2d8cf0; }
.panel-head .close { margin-right: 12px; }

.list-tools {
  display: flex;
  align-items: center;
  gap: 11px;
  padding: 9px 0 0 12px;
}
.tbtn {
  width: 40px;
  height: 32px;
  background: #f6f6f6;
  border-radius: 4px;
  display: flex;
  align-items: center;
  justify-content: center;
}
.tb-new { margin-right: -9px; border-radius: 4px 0 0 4px; }
.tb-drop { width: 14px; border-radius: 0 4px 4px 0; }
.tb-more {
  width: 33px;
  margin-left: 18px;
  background: #f4f4f4;
  border: 1px solid #e3e3e3;
}
.search {
  height: 32px;
  margin: 10px 12px 0 10px;
  padding: 0 15px 0 14px;
  background: #f5f5f5;
  border-radius: 16px;
  display: flex;
  align-items: center;
  justify-content: space-between;
  font-size: 14px;
  color: #888;
}
.comp-list {
  height: 218px;
  margin-top: 14px;
  padding-left: 15px;
  overflow: hidden;
  font-size: 15px;
  color: #444;
  flex: none;
}
.comp-list li {
  width: 312px;
  height: 26px;
  margin: 0 0 4px;
  padding-left: 4px;
  line-height: 26px;
  white-space: nowrap;
  overflow: hidden;
}
.comp-list .picked-row { background: #bcd6f0; color: #333; }
.w-a { width: 122px; margin-left: -1px; }
.w-b { width: 124px; }
.w-c { width: 124px; }
.w-d { width: 128px; }
.w-e { width: 108px; }
.w-f { width: 108px; }
.w-g { width: 106px; margin-left: 1px; }
.w-h { width: 108px; height: 15px; }
.w-i { width: 214px; height: 18px; vertical-align: -4px; }
.hscroll {
  width: 280px;
  height: 4px;
  margin: 6px 0 0 19px;
  background: #eee;
  border-radius: 2px;
}
.vscroll {
  position: absolute;
  right: 14px;
  top: 217px;
  width: 4px;
  height: 103px;
  background: #efefef;
  border-radius: 2px;
}

.prop-head {
  display: grid;
  grid-template-columns: 126px 1fr;
  height: 30px;
  margin-top: 2px;
  background: #efefef;
  border-top: 1px solid #ddd;
  border-bottom: 1px solid #ddd;
  line-height: 28px;
  text-align: center;
  font-size: 15px;
  font-weight: 500;
  color: #444;
}
.prop-head div + div { border-left: 1px solid #d8d8d8; }
.prop-section {
  height: 30px;
  background: #efefef;
  line-height: 33px;
  padding-left: 11px;
  font-size: 15px;
  color: #444;
}
.prop-section .caret { margin-right: 8px; vertical-align: 3px; }
.prop-row {
  display: grid;
  grid-template-columns: 126px 1fr;
  height: 31px;
  align-items: center;
  flex: none;
  font-size: 15px;
  color: #444;
}
.prop-section + .prop-row { margin-top: 2px; }
.prop-row label { padding-left: 19px; white-space: nowrap; }
.prop-row .link { color: #3a78e0; }
.field {
  height: 26px;
  margin: 0 2px 0 0;
  padding-left: 3px;
  border: 1px solid #ddd;
  line-height: 24px;
  font-size: 14.5px;
  white-space: nowrap;
  overflow: hidden;
}

/* 绘图区 */
.canvas {
  flex: 1;
  position: relative;
  background: #000;
  overflow: hidden;
  border-top: 1px solid #ccc;
}
.cad-view { display: block; }
.notice text { fill: #303030; font-size: 15px; }
.faint { fill: none; stroke: #084058; stroke-width: 1; }
.axis { fill: none; stroke: #0a6e0a; stroke-width: 1.2; }
.axis-text text {
  fill: #e2e2e2;
  font-family: "Liberation Sans", sans-serif;
  font-size: 23px;
}
.tiny text { fill: #d8e2e6; font-size: 8px; }

.guide {
  position: absolute;
  right: 0;
  top: 0;
  width: 301px;
  height: 93px;
  background: #2a4a6f;
  color: #fff;
  overflow: hidden;
}
.guide-title {
  padding: 11px 0 0 11px;
  font-size: 14px;
  line-height: 20px;
}
.steps {
  display: flex;
  margin: 4px 0 0 15px;
}
.step {
  width: 141px;
  flex: none;
  display: flex;
  flex-direction: column;
  align-items: center;
  position: relative;
}
.step .line {
  position: absolute;
  left: 0;
  right: 3px;
  top: 9px;
  height: 4px;
  background: #a3c6ec;
}
.step.done .line { background: #1fb055; }
.step .dot {
  width: 22px;
  height: 22px;
  border-radius: 50%;
  position: relative;
  display: flex;
  align-items: center;
  justify-content: center;
  font-size: 14px;
}
.step.done .dot { background: #1fb055; }
.step.now .dot { background: #2566ae; box-shadow: 0 0 0 2px #a3c6ec; }
.step-name {
  margin-top: 9px;
  font-size: 15px;
  line-height: 20px;
  color: #f2f4f7;
}

.dialog {
  position: absolute;
  left: 1px;
  top: 342px;
  width: 450px;
  height: 234px;
  display: flex;
  flex-direction: column;
  background: linear-gradient(90deg, #e2e2e2, #e5e5e5 40%, #eeeeee 45%, #e4e4e4 50%, #e6eaec 100%);
  border: 1px solid #c4c4c4;
  color: #444;
  font-family: "Liberation Sans", "Noto Sans CJK SC", sans-serif;
}
.dialog-head {
  display: flex;
  justify-content: space-between;
  align-items: center;
  padding: 15px 16px 0 21px;
  font-size: 17px;
  line-height: 20px;
}
.dialog-body {
  display: flex;
  gap: 13px;
  padding: 23px 0 0 31px;
}
.info { flex: none; margin-top: 6px; }
.dialog-body p {
  margin: 0;
  font-size: 17.5px;
  line-height: 32.5px;
  white-space: nowrap;
}
.dialog-foot {
  margin-top: auto;
  padding: 0 14px 11px 0;
  display: flex;
  justify-content: flex-end;
}
.btn-ok {
  width: 97px;
  height: 33px;
  background: #2e82e0;
  border-radius: 3px;
  color: #fff;
  font-size: 15px;
}

.marks {
  position: absolute;
  left: 0;
  top: 0;
  pointer-events: none;
}
```
